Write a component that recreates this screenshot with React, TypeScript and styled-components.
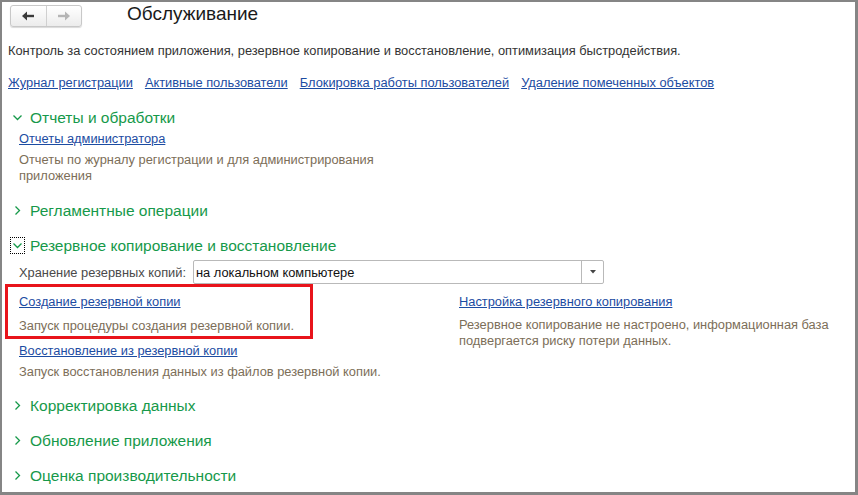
import React from "react";
import styled, { createGlobalStyle } from "styled-components";

const Global = createGlobalStyle`
  html, body { margin: 0; padding: 0; background: #fff; }
  body { font-family: "Liberation Sans", Arial, sans-serif; }
`;

const Frame = styled.div`
  width: 858px;
  height: 495px;
  box-sizing: border-box;
  border-style: solid;
  border-color: #858585;
  border-width: 2px 3px 3px 2px;
  background: #fff;
  overflow: hidden;
  font-size: 12.85px;
  line-height: 15px;
  color: #333;
`;

const Header = styled.div`
  display: flex;
  align-items: center;
  height: 26px;
  padding: 1px 0 0 8px;
`;

const NavGroup = styled.div`
  display: flex;
  width: 72px;
  height: 22px;
  box-sizing: border-box;
  border: 1px solid #c8c8c8;
  border-radius: 3px;
  background: linear-gradient(#ffffff, #ececec);
  box-shadow: 0 1px 1px rgba(0, 0, 0, 0.15);
`;

const NavBtn = styled.div<{ $divider?: boolean }>`
  flex: 1;
  display: flex;
  align-items: center;
  justify-content: center;
  border-right: ${(p) => (p.$divider ? "1px solid #d0d0d0" : "none")};
`;

const Title = styled.div`
  margin-left: 45px;
  font-size: 19px;
  line-height: 22px;
  color: #1a1a1a;
  padding-bottom: 5px;
`;

const Body = styled.div`
  padding: 0 6px;
`;

const Description = styled.div`
  margin-top: 14px;
`;

const LinksRow = styled.div`
  display: flex;
  gap: 12px;
  margin-top: 17px;
`;

const Link = styled.a`
  color: #1c4ca2;
  text-decoration: underline;
  text-underline-offset: 1px;
  cursor: pointer;
`;

const Section = styled.div<{ $top: number }>`
  margin-top: ${(p) => p.$top}px;
`;

const SectionHeader = styled.div`
  display: flex;
  align-items: center;
  height: 20px;
  color: #16994a;
  font-size: 15.5px;
`;

const Toggle = styled.span<{ $focused?: boolean }>`
  display: flex;
  align-items: center;
  justify-content: center;
  width: 15px;
  height: 17px;
  box-sizing: border-box;
  margin: 0 5px 0 2px;
  border: ${(p) => (p.$focused ? "1px dotted #000" : "1px solid transparent")};
`;

const SectionBody = styled.div`
  padding-left: 11px;
`;

const Item = styled.div<{ $top: number }>`
  margin-top: ${(p) => p.$top}px;
`;

const Note = styled.div<{ $top: number }>`
  margin-top: ${(p) => p.$top}px;
  color: #7c6e58;
  line-height: 16px;
`;

const FieldRow = styled.div`
  display: flex;
  align-items: center;
  margin-top: 5px;
  height: 24px;
`;

const FieldLabel = styled.div`
  width: 174px;
  color: #4a4a4a;
`;

const Combo = styled.div`
  display: flex;
  width: 411px;
  height: 24px;
  box-sizing: border-box;
  border: 1px solid #b9b9b9;
  border-radius: 2px;
`;

const ComboValue = styled.div`
  flex: 1;
  display: flex;
  align-items: center;
  padding-left: 2px;
  color: #111;
`;

const ComboButton = styled.div`
  width: 21px;
  border-left: 1px solid #b9b9b9;
  display: flex;
  align-items: center;
  justify-content: center;
`;

const Columns = styled.div`
  display: grid;
  grid-template-columns: 440px 1fr;
  margin-top: 4px;
`;

const Highlighted = styled.div`
  position: relative;
`;

const RedBox = styled.div`
  position: absolute;
  left: -14px;
  top: -10px;
  width: 308px;
  height: 55px;
  box-sizing: border-box;
  border: 3px solid #e8141b;
`;

const Chevron = ({ open }: { open?: boolean }) => (
  <svg width="11" height="11" viewBox="0 0 11 11">
    {open ? (
      <polyline points="1.5,3.5 5.5,7.5 9.5,3.5" fill="none" stroke="#16994a" strokeWidth="1.3" />
    ) : (
      <polyline points="3.5,1.5 7.5,5.5 3.5,9.5" fill="none" stroke="#16994a" strokeWidth="1.3" />
    )}
  </svg>
);

const Arrow = ({ dir, color }: { dir: "left" | "right"; color: string }) => (
  <svg width="14" height="10" viewBox="0 0 14 10">
    {dir === "left" ? (
      <>
        <rect x="5" y="3.8" width="8" height="2.4" fill={color} />
        <polygon points="1,5 6,0.5 6,9.5" fill={color} />
      </>
    ) : (
      <>
        <rect x="1" y="3.8" width="8" height="2.4" fill={color} />
        <polygon points="13,5 8,0.5 8,9.5" fill={color} />
      </>
    )}
  </svg>
);

const SectionTitle = ({
  title,
  open,
  focused,
}: {
  title: string;
  open?: boolean;
  focused?: boolean;
}) => (
  <SectionHeader>
    <Toggle $focused={focused}>
      <Chevron open={open} />
    </Toggle>
    {title}
  </SectionHeader>
);

export default function App() {
  return (
    <>
      <Global />
      <Frame>
        <Header>
          <NavGroup>
            <NavBtn $divider>
              <Arrow dir="left" color="#3a3a3a" />
            </NavBtn>
            <NavBtn>
              <Arrow dir="right" color="#b5b5b5" />
            </NavBtn>
          </NavGroup>
          <Title>Обслуживание</Title>
        </Header>
        <Body>
          <Description>
            Контроль за состоянием приложения, резервное копирование и восстановление, оптимизация быстродействия.
          </Description>
          <LinksRow>
            <Link>Журнал регистрации</Link>
            <Link>Активные пользователи</Link>
            <Link>Блокировка работы пользователей</Link>
            <Link>Удаление помеченных объектов</Link>
          </LinksRow>

          <Section $top={17}>
            <SectionTitle title="Отчеты и обработки" open />
            <SectionBody>
              <Item $top={4}>
                <Link>Отчеты администратора</Link>
              </Item>
              <Note $top={6}>
                Отчеты по журналу регистрации и для администрирования
                <br />
                приложения
              </Note>
            </SectionBody>
          </Section>

          <Section $top={16}>
            <SectionTitle title="Регламентные операции" />
          </Section>

          <Section $top={15}>
            <SectionTitle title="Резервное копирование и восстановление" open focused />
            <SectionBody>
              <FieldRow>
                <FieldLabel>Хранение резервных копий:</FieldLabel>
                <Combo>
                  <ComboValue>на локальном компьютере</ComboValue>
                  <ComboButton>
                    <svg width="6" height="4" viewBox="0 0 6 4">
                      <polygon points="0,0 6,0 3,3.5" fill="#444" />
                    </svg>
                  </ComboButton>
                </Combo>
              </FieldRow>
              <Columns>
                <div>
                  <Highlighted>
                    <RedBox />
                    <Item $top={6}>
                      <Link>Создание резервной копии</Link>
                    </Item>
                    <Note $top={9}>Запуск процедуры создания резервной копии.</Note>
                  </Highlighted>
                  <Item $top={9}>
                    <Link>Восстановление из резервной копии</Link>
                  </Item>
                  <Note $top={6}>Запуск восстановления данных из файлов резервной копии.</Note>
                </div>
                <div>
                  <Item $top={6}>
                    <Link>Настройка резервного копирования</Link>
                  </Item>
                  <Note $top={8}>
                    Резервное копирование не настроено, информационная база
                    <br />
                    подвергается риску потери данных.
                  </Note>
                </div>
              </Columns>
            </SectionBody>
          </Section>

          <Section $top={15}>
            <SectionTitle title="Корректировка данных" />
          </Section>
          <Section $top={15}>
            <SectionTitle title="Обновление приложения" />
          </Section>
          <Section $top={15}>
            <SectionTitle title="Оценка производительности" />
          </Section>
        </Body>
      </Frame>
    </>
  );
}
